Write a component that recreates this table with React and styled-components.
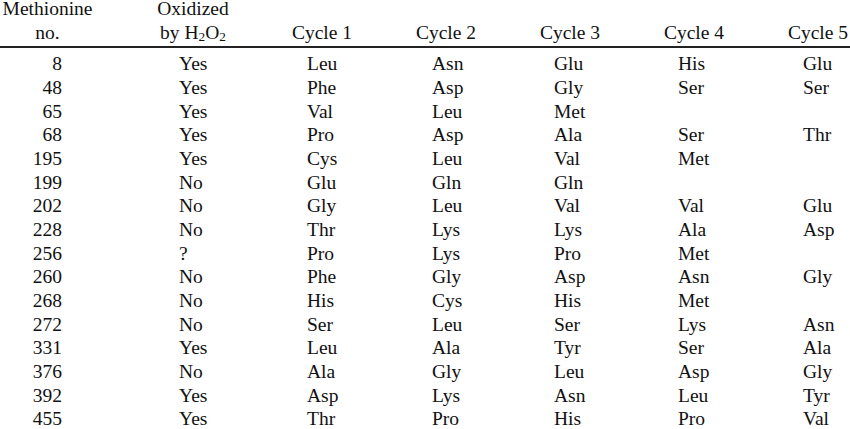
import React from "react";
import styled, {createGlobalStyle} from "styled-components";

const GlobalStyle = createGlobalStyle`
  html, body {
    margin: 0;
    padding: 0;
    background: #fff;
    overflow: hidden;
  }
  body {
    font-family: "Liberation Serif", "Times New Roman", serif;
    color: #111;
  }
`;

const COLS = "126px 134px 124px 124px 124px 124px 94px";

const rows = [
    ["8", "Yes", "Leu", "Asn", "Glu", "His", "Glu"],
    ["48", "Yes", "Phe", "Asp", "Gly", "Ser", "Ser"],
    ["65", "Yes", "Val", "Leu", "Met", "", ""],
    ["68", "Yes", "Pro", "Asp", "Ala", "Ser", "Thr"],
    ["195", "Yes", "Cys", "Leu", "Val", "Met", ""],
    ["199", "No", "Glu", "Gln", "Gln", "", ""],
    ["202", "No", "Gly", "Leu", "Val", "Val", "Glu"],
    ["228", "No", "Thr", "Lys", "Lys", "Ala", "Asp"],
    ["256", "?", "Pro", "Lys", "Pro", "Met", ""],
    ["260", "No", "Phe", "Gly", "Asp", "Asn", "Gly"],
    ["268", "No", "His", "Cys", "His", "Met", ""],
    ["272", "No", "Ser", "Leu", "Ser", "Lys", "Asn"],
    ["331", "Yes", "Leu", "Ala", "Tyr", "Ser", "Ala"],
    ["376", "No", "Ala", "Gly", "Leu", "Asp", "Gly"],
    ["392", "Yes", "Asp", "Lys", "Asn", "Leu", "Tyr"],
    ["455", "Yes", "Thr", "Pro", "His", "Pro", "Val"],
];

// left padding of data per column (col 0 is right aligned)
const dataPad = [0, 53, 47, 48, 46, 46, 47];

function App() {
    return (
        <>
            <GlobalStyle/>
            <Table>
                <HeadRow>
                    <HeadCell pr={31}>Methionine<br/>no.</HeadCell>
                    <HeadCell>Oxidized<br/>by H<Sub>2</Sub>O<Sub>2</Sub></HeadCell>
                    <HeadCell><br/>Cycle 1</HeadCell>
                    <HeadCell><br/>Cycle 2</HeadCell>
                    <HeadCell><br/>Cycle 3</HeadCell>
                    <HeadCell><br/>Cycle 4</HeadCell>
                    <HeadCell align="right" pr={2}><br/>Cycle 5</HeadCell>
                </HeadRow>
                <Body>
                    {rows.map((r) => (
                        <Row key={r[0]}>
                            {r.map((v, i) => (
                                i === 0
                                    ? <NumCell key={i}>{v}</NumCell>
                                    : <Cell key={i} pl={dataPad[i]}>{v}</Cell>
                            ))}
                        </Row>
                    ))}
                </Body>
            </Table>
        </>
    );
}

export default App;

const Table = styled.div`
  width: 850px;
  margin-top: -3px;
  font-size: 19.5px;
  line-height: 23.67px;
`;

const HeadRow = styled.div`
  display: grid;
  grid-template-columns: ${COLS};
  padding-bottom: 2px;
  border-bottom: 2px solid #222;
`;

const HeadCell = styled.div`
  text-align: ${(p) => p.align || "center"};
  padding-right: ${(p) => p.pr || 0}px;
  white-space: nowrap;
`;

const Sub = styled.sub`
  font-size: 0.68em;
  line-height: 0;
  vertical-align: -0.15em;
`;

const Body = styled.div`
  padding-top: 4px;
`;

const Row = styled.div`
  display: grid;
  grid-template-columns: ${COLS};
  height: 23.67px;
`;

const NumCell = styled.div`
  text-align: right;
  padding-right: 64px;
`;

const Cell = styled.div`
  text-align: left;
  padding-left: ${(p) => p.pl}px;
  white-space: nowrap;
`;
